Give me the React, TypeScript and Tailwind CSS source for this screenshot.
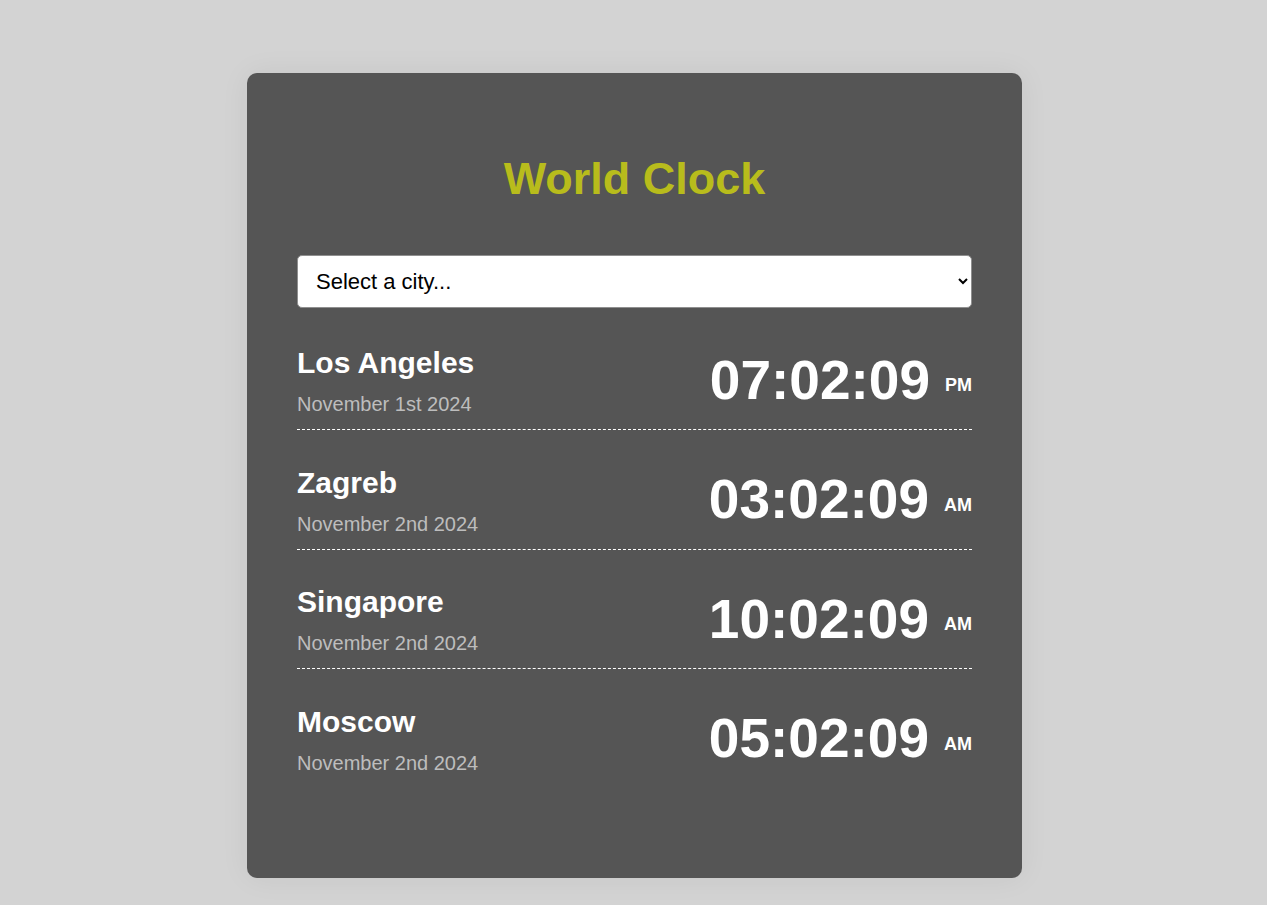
import React, { useState } from 'react';

type City = { name: string; date: string; time: string; ampm: string };

const cities: City[] = [
  { name: 'Los Angeles', date: 'November 1st 2024', time: '07:02:09', ampm: 'PM' },
  { name: 'Zagreb', date: 'November 2nd 2024', time: '03:02:09', ampm: 'AM' },
  { name: 'Singapore', date: 'November 2nd 2024', time: '10:02:09', ampm: 'AM' },
  { name: 'Moscow', date: 'November 2nd 2024', time: '05:02:09', ampm: 'AM' },
];

const App: React.FC = () => {
  const [city, setCity] = useState('');

  return (
    <div className="min-h-screen bg-[#d3d3d3] flex justify-center pt-[73px] font-['Liberation_Sans',Arial,sans-serif]">
      <div className="ml-[2px] w-[775px] h-[805px] bg-[#555555] rounded-[10px] shadow-[0_0_30px_rgba(0,0,0,0.06)] px-[50px] pt-[50px]">
        <h1 className="mt-[22px] mb-[42px] text-center text-[45px] font-bold leading-normal text-[#b8bc1c]">
          World Clock
        </h1>

        {/* city picker */}
        <select
          value={city}
          onChange={(e) => setCity(e.target.value)}
          className="w-full h-[53px] bg-white text-black text-[22px] pl-[14px] pr-[7px] rounded-[5px] border border-[#8f8f8f] mb-[20px]"
        >
          <option value="">Select a city...</option>
          <option value="tokyo">Tokyo</option>
          <option value="london">London</option>
          <option value="newyork">New York</option>
        </select>

        <div>
          {cities.map((c, i) => (
            <div
              key={c.name}
              className={`flex items-center justify-between pt-[11px] pb-[8px] mb-[17px] ${i < cities.length - 1 ? 'border-b border-dashed border-white' : ''}`}
            >
              <div>
                <div className="text-[30px] font-bold leading-normal text-white">{c.name}</div>
                <div className="mt-[4px] text-[20px] leading-normal text-[#bdbdbd]">{c.date}</div>
              </div>
              <div className="flex items-center">
                <span className="text-[55px] font-bold leading-normal text-white">{c.time}</span>
                <span className="ml-[15px] mt-[12px] text-[18px] font-bold leading-normal text-white">{c.ampm}</span>
              </div>
            </div>
          ))}
        </div>
      </div>
    </div>
  );
};

export default App;
